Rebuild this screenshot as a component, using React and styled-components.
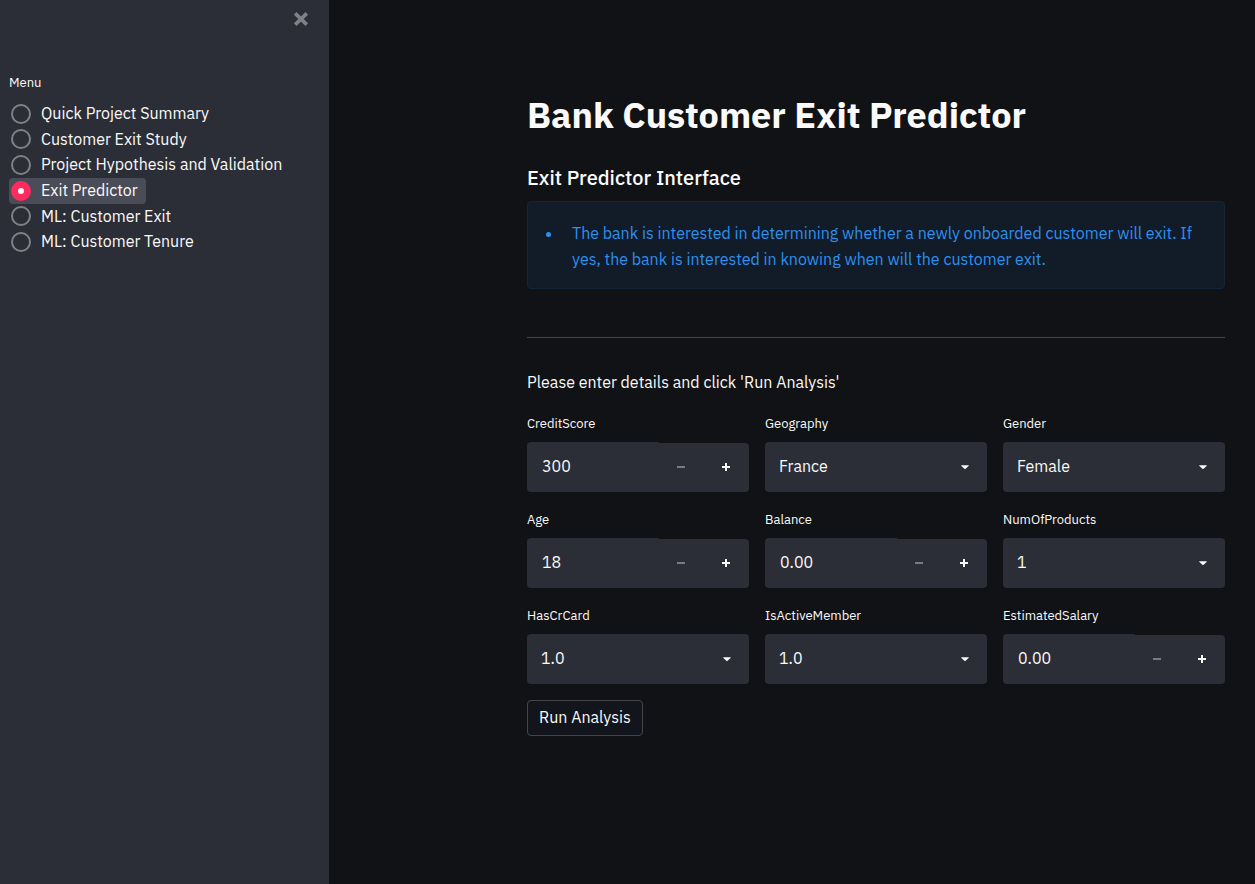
import React, { useId, useState } from "react";
import styled, { createGlobalStyle } from "styled-components";

const color = {
  page: "#111216",
  panel: "#2c2e37",
  highlight: "#4a4c58",
  text: "#fafafa",
  muted: "#808187",
  disabled: "#777a8c",
  accent: "#ff2b5e",
  info: "#2f8fee",
  infoBack: "#111c28",
  infoLine: "#132638",
  line: "#444549",
};

const GlobalStyle = createGlobalStyle`
  *, *::before, *::after { box-sizing: border-box; }
  body {
    margin: 0;
    background: ${color.page};
    color: ${color.text};
    font-family: "IBM Plex Sans", Roboto, "Noto Sans", sans-serif;
    font-size: 16px;
    line-height: 26px;
    -webkit-font-smoothing: antialiased;
  }
  button, input, select { font: inherit; color: inherit; }
`;

const Page = styled.div`
  display: flex;
  min-height: 100vh;
`;

const Sidebar = styled.aside`
  flex: 0 0 329px;
  padding: 7px 9px;
  background: ${color.panel};
`;

const SidebarTop = styled.div`
  display: flex;
  justify-content: flex-end;
  padding-right: 7px;
  margin-bottom: 42px;
`;

const CloseButton = styled.button`
  display: flex;
  padding: 4px;
  border: 0;
  background: none;
  color: ${color.muted};
  cursor: pointer;
`;

const Menu = styled.fieldset`
  margin: 0;
  padding: 0;
  border: 0;
  min-width: 0;
`;

const MenuTitle = styled.legend`
  padding: 0;
  margin-bottom: 8px;
  font-size: 13px;
  line-height: 20px;
`;

const MenuList = styled.div`
  display: grid;
  grid-template-rows: repeat(6, minmax(0, 1fr));
  justify-items: start;
  height: 154px;
`;

const MenuItem = styled.label`
  display: flex;
  align-items: center;
  gap: 10px;
  padding: 0 8px 0 2px;
  border-radius: 4px;
  cursor: pointer;

  &:has(input:checked) {
    background: ${color.highlight};
  }
`;

const MenuText = styled.span`
  padding-bottom: 2px;
  line-height: 24px;
`;

const Radio = styled.input`
  appearance: none;
  flex: none;
  width: 20px;
  height: 20px;
  margin: 0;
  border: 2px solid ${color.muted};
  border-radius: 50%;

  &:checked {
    border: 7px solid ${color.accent};
    background: ${color.text};
  }
`;

const Main = styled.main`
  flex: 1;
  min-width: 0;
`;

const Content = styled.div`
  max-width: 758px;
  margin-left: auto;
  padding: 85px 30px 40px;
`;

const Title = styled.h1`
  margin: 0 0 19px;
  font-size: 36px;
  font-weight: 700;
  line-height: 60px;
`;

const Subtitle = styled.h2`
  margin: 0 0 9px;
  font-size: 20px;
  font-weight: 500;
  line-height: 28px;
`;

const Notice = styled.div`
  padding: 18px 16px 16px;
  border: 1px solid ${color.infoLine};
  border-radius: 4px;
  background: ${color.infoBack};
  color: ${color.info};
`;

const NoticeList = styled.ul`
  margin: 0;
  padding: 0 0 0 19px;
`;

const NoticeItem = styled.li`
  padding-left: 9px;
`;

const Divider = styled.hr`
  height: 1px;
  margin: 48px 0 31px;
  border: 0;
  background: ${color.line};
`;

const Intro = styled.p`
  margin: 0 0 19px;
`;

const Fields = styled.div`
  display: grid;
  grid-template-columns: repeat(3, minmax(0, 1fr));
  gap: 18px 16px;
  margin-bottom: 16px;
`;

const Field = styled.div`
  display: flex;
  flex-direction: column;
  gap: 8px;
`;

const FieldLabel = styled.label`
  font-size: 13px;
  line-height: 20px;
`;

const NumberBox = styled.div`
  display: flex;
  align-items: flex-end;
  height: 50px;
`;

const NumberInput = styled.input`
  flex: 1;
  min-width: 0;
  height: 50px;
  padding: 0 15px 3px;
  border: 0;
  border-radius: 4px 0 0 4px;
  background: ${color.panel};
`;

const StepButton = styled.button`
  display: grid;
  place-items: center;
  width: 45px;
  height: 49px;
  padding: 0 0 2px;
  border: 0;
  background: ${color.panel};
  cursor: pointer;

  &:disabled { color: ${color.disabled}; cursor: default; }
  &:last-child { border-radius: 0 4px 4px 0; }
`;

const SelectBox = styled.div`
  display: grid;
  align-items: center;

  & > * { grid-area: 1 / 1; }
  & > svg {
    justify-self: end;
    margin: 0 14px 2px 0;
    pointer-events: none;
  }
`;

const Select = styled.select`
  appearance: none;
  width: 100%;
  height: 50px;
  padding: 0 40px 3px 14px;
  border: 0;
  border-radius: 4px;
  background: ${color.panel};
`;

const RunButton = styled.button`
  height: 36px;
  padding: 0 11px 3px;
  border: 1px solid ${color.line};
  border-radius: 4px;
  background: #13151d;
  cursor: pointer;
`;

const CloseIcon = () => (
  <svg width="16" height="16" viewBox="0 0 16 16" aria-hidden="true">
    <path d="M2.2 2.4 13.8 13.6M13.8 2.4 2.2 13.6" fill="none" stroke="currentColor" strokeWidth="3.6" />
  </svg>
);

const MinusIcon = () => (
  <svg width="9" height="8" viewBox="0 0 9 8" aria-hidden="true">
    <path d="M0 3h8v2H0z" fill="currentColor" />
  </svg>
);

const PlusIcon = () => (
  <svg width="9" height="8" viewBox="0 0 9 8" aria-hidden="true">
    <path d="M0 3h3V0h2v3h3v2H5v3H3V5H0z" fill="currentColor" />
  </svg>
);

const CaretIcon = () => (
  <svg width="16" height="16" viewBox="0 0 16 16" aria-hidden="true">
    <path d="M4.7 7.3h6.6c.5 0 .6.4.3.7L8.6 10.8a.8.8 0 0 1-1.2 0L4.4 8c-.3-.3-.2-.7.3-.7z" fill="currentColor" />
  </svg>
);

function NumberField({ label, min, decimals = 0 }) {
  const id = useId();
  const [value, setValue] = useState(min.toFixed(decimals));
  const step = (by) =>
    setValue(Math.max(min, (Number(value) || min) + by).toFixed(decimals));
  return (
    <Field>
      <FieldLabel htmlFor={id}>{label}</FieldLabel>
      <NumberBox>
        <NumberInput
          id={id}
          inputMode="decimal"
          value={value}
          onChange={(e) => setValue(e.target.value)}
        />
        <StepButton
          type="button"
          aria-label={`Decrease ${label}`}
          disabled={Number(value) <= min}
          onClick={() => step(-1)}
        >
          <MinusIcon />
        </StepButton>
        <StepButton type="button" aria-label={`Increase ${label}`} onClick={() => step(1)}>
          <PlusIcon />
        </StepButton>
      </NumberBox>
    </Field>
  );
}

function SelectField({ label, options }) {
  const id = useId();
  return (
    <Field>
      <FieldLabel htmlFor={id}>{label}</FieldLabel>
      <SelectBox>
        <Select id={id}>
          {options.map((option) => (
            <option key={option}>{option}</option>
          ))}
        </Select>
        <CaretIcon />
      </SelectBox>
    </Field>
  );
}

const pages = [
  "Quick Project Summary",
  "Customer Exit Study",
  "Project Hypothesis and Validation",
  "Exit Predictor",
  "ML: Customer Exit",
  "ML: Customer Tenure",
];

export default function App() {
  const [page, setPage] = useState("Exit Predictor");
  return (
    <>
      <GlobalStyle />
      <Page>
        <Sidebar>
          <SidebarTop>
            <CloseButton type="button" aria-label="Close menu">
              <CloseIcon />
            </CloseButton>
          </SidebarTop>
          <Menu>
            <MenuTitle>Menu</MenuTitle>
            <MenuList>
              {pages.map((name) => (
                <MenuItem key={name}>
                  <Radio
                    type="radio"
                    name="page"
                    checked={page === name}
                    onChange={() => setPage(name)}
                  />
                  <MenuText>{name}</MenuText>
                </MenuItem>
              ))}
            </MenuList>
          </Menu>
        </Sidebar>
        <Main>
          <Content>
            <Title>Bank Customer Exit Predictor</Title>
            <Subtitle>Exit Predictor Interface</Subtitle>
            <Notice>
              <NoticeList>
                <NoticeItem>
                  The bank is interested in determining whether a newly onboarded customer will
                  exit. If yes, the bank is interested in knowing when will the customer exit.
                </NoticeItem>
              </NoticeList>
            </Notice>
            <Divider />
            <form onSubmit={(e) => e.preventDefault()}>
              <Intro>Please enter details and click 'Run Analysis'</Intro>
              <Fields>
                <NumberField label="CreditScore" min={300} />
                <SelectField label="Geography" options={["France", "Germany", "Spain"]} />
                <SelectField label="Gender" options={["Female", "Male"]} />
                <NumberField label="Age" min={18} />
                <NumberField label="Balance" min={0} decimals={2} />
                <SelectField label="NumOfProducts" options={["1", "2", "3", "4"]} />
                <SelectField label="HasCrCard" options={["1.0", "0.0"]} />
                <SelectField label="IsActiveMember" options={["1.0", "0.0"]} />
                <NumberField label="EstimatedSalary" min={0} decimals={2} />
              </Fields>
              <RunButton type="submit">Run Analysis</RunButton>
            </form>
          </Content>
        </Main>
      </Page>
    </>
  );
}
